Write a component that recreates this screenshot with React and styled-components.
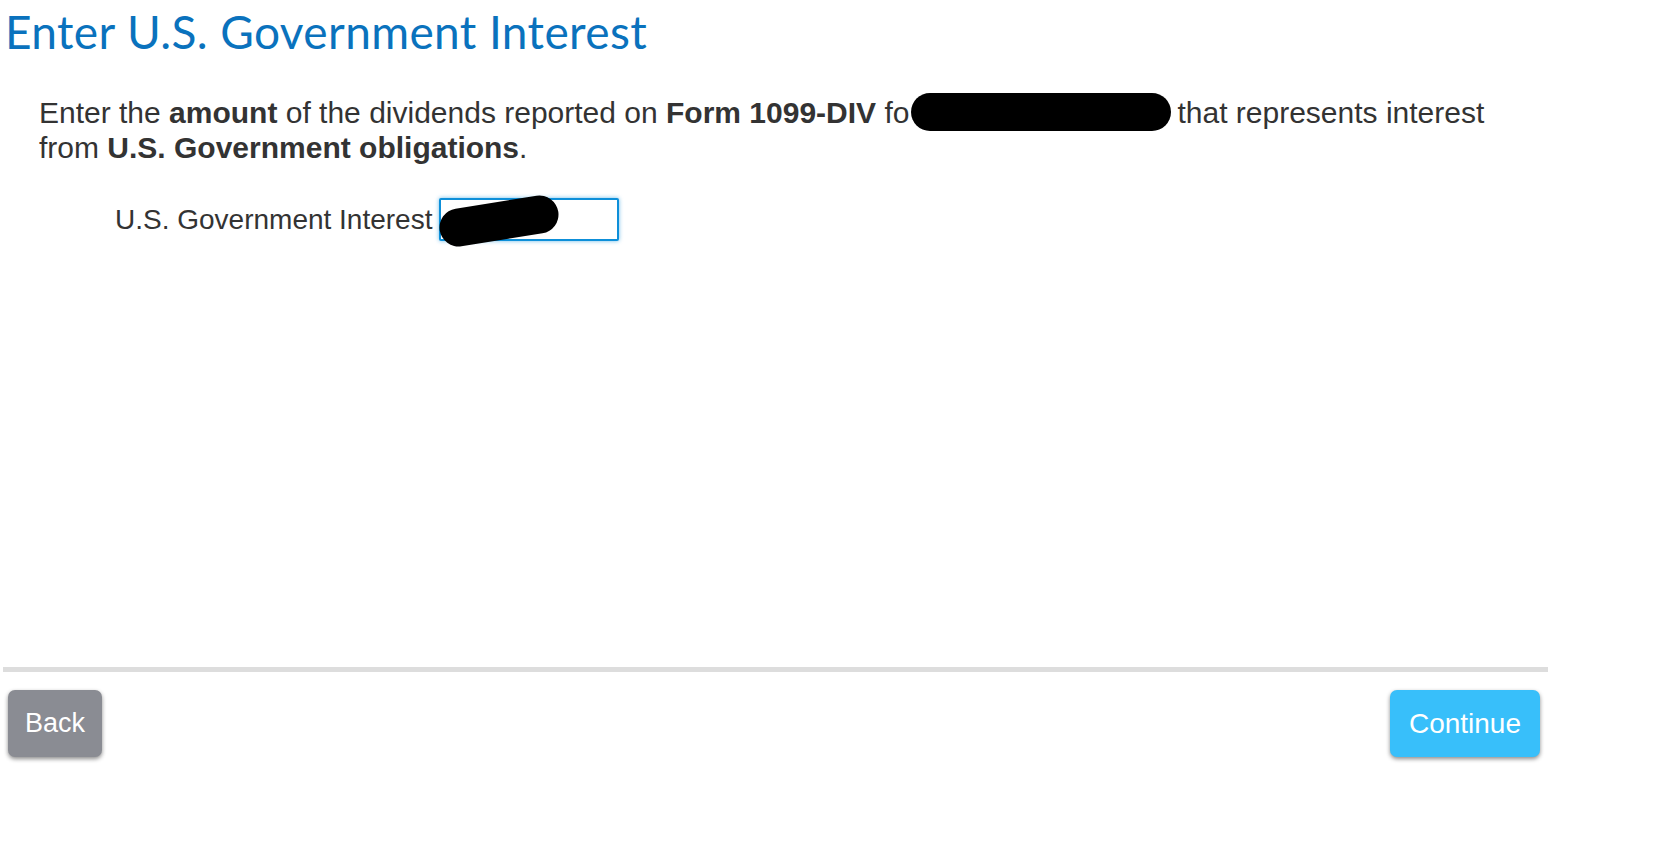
import React from 'react';
import styled, { createGlobalStyle } from 'styled-components';

const GlobalStyle = createGlobalStyle`
  html, body {
    margin: 0;
    padding: 0;
    background: #ffffff;
  }
  body {
    font-family: "Liberation Sans", Arial, sans-serif;
    color: #333333;
  }
`;

const App = () => {
  return (
    <>
      <GlobalStyle />
      <StyledPage>
        <StyledTitle>Enter U.S. Government Interest</StyledTitle>
        <StyledIntro>
          Enter the <b>amount</b> of the dividends reported on <b>Form 1099-DIV</b> fo
          <StyledRedaction />
          that represents interest
          <br />
          from <b>U.S. Government obligations</b>.
        </StyledIntro>
        <StyledFieldRow>
          <StyledLabel htmlFor="usgi">U.S. Government Interest</StyledLabel>
          <StyledInputWrap>
            <StyledInput id="usgi" type="text" />
            <StyledInputBlot />
          </StyledInputWrap>
        </StyledFieldRow>
        <StyledSpacer />
        <StyledFooter>
          <StyledDivider />
          <StyledButtonBar>
            <StyledButton $variant="back">Back</StyledButton>
            <StyledButton $variant="primary">Continue</StyledButton>
          </StyledButtonBar>
        </StyledFooter>
      </StyledPage>
    </>
  );
};

export default App;

const StyledPage = styled.div`
  display: flex;
  flex-direction: column;
  width: 1548px;
  height: 856px;
  padding-left: 3px;
  box-sizing: border-box;
`;

const StyledTitle = styled.h1`
  margin: 5px 0 0 2px;
  font-family: Lato, "Noto Sans", sans-serif;
  font-weight: 400;
  font-size: 46px;
  line-height: 54px;
  color: #0a72bd;
  letter-spacing: 0.4px;
`;

const StyledIntro = styled.p`
  margin: 37px 0 0 36px;
  font-size: 30px;
  line-height: 34px;
  color: #333333;

  b {
    font-weight: 700;
  }
`;

const StyledRedaction = styled.span`
  display: inline-block;
  vertical-align: middle;
  width: 260px;
  height: 38px;
  margin: -6px 6px 0 2px;
  background: #000000;
  border-radius: 19px;
`;

const StyledFieldRow = styled.div`
  display: flex;
  align-items: center;
  gap: 7px;
  margin: 33px 0 0 112px;
`;

const StyledLabel = styled.label`
  font-size: 28px;
  color: #333333;
`;

const StyledInputWrap = styled.div`
  position: relative;
  width: 180px;
  height: 43px;
`;

const StyledInput = styled.input`
  width: 100%;
  height: 100%;
  box-sizing: border-box;
  border: 2px solid #0d8fd9;
  border-radius: 2px;
  box-shadow: 0 0 4px rgba(13, 143, 217, 0.6);
  outline: none;
  font-size: 22px;
  padding: 0 8px;
`;

const StyledInputBlot = styled.span`
  position: absolute;
  left: 0;
  top: 4px;
  width: 120px;
  height: 38px;
  background: #000000;
  border-radius: 19px;
  transform: rotate(-9deg);
`;

const StyledSpacer = styled.div`
  flex: 1;
`;

const StyledFooter = styled.div`
  display: flex;
  flex-direction: column;
  padding-bottom: 99px;
`;

const StyledDivider = styled.div`
  height: 5px;
  background: #dddddd;
`;

const StyledButtonBar = styled.div`
  display: flex;
  justify-content: space-between;
  align-items: center;
  padding: 18px 8px 0 5px;
`;

const StyledButton = styled.button`
  height: 67px;
  padding: 0 ${({ $variant }) => ($variant === 'primary' ? '19px' : '17px')};
  border: none;
  border-radius: 7px;
  font-family: "Liberation Sans", Arial, sans-serif;
  font-size: ${({ $variant }) => ($variant === 'primary' ? '28px' : '27px')};
  color: #ffffff;
  background: ${({ $variant }) => ($variant === 'primary' ? '#38bffa' : '#8a8c93')};
  box-shadow: 0 2px 4px rgba(0, 0, 0, 0.45);
  cursor: pointer;
`;
